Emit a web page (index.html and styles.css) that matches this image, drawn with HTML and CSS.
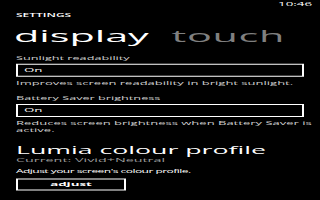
FILE: index.html
```html
<!DOCTYPE html>
<html>
<head>
<meta charset="utf-8">
<link rel="stylesheet" href="styles.css">
</head>
<body>
<div class="screen">
  <div class="status"><span class="clock">10:46</span></div>
  <div class="page">
    <div class="title">SETTINGS</div>
    <div class="pivot">
      <span class="pivot-item active">display</span>
      <span class="pivot-item">touch</span>
    </div>
    <div class="content">
      <div class="label">Sunlight readability</div>
      <div class="picker">On</div>
      <div class="desc">Improves screen readability in bright sunlight.</div>
      <div class="label label-next">Battery Saver brightness</div>
      <div class="picker">On</div>
      <div class="desc">Reduces screen brightness when Battery Saver is<br>active.</div>
      <div class="heading">Lumia colour profile</div>
      <div class="sub">Current: Vivid+Neutral</div>
      <div class="note">Adjust your screen's colour profile.</div>
      <button class="btn">adjust</button>
    </div>
  </div>
</div>
</body>
</html>
```
FILE: styles.css
```css
html, body {
  margin: 0;
  padding: 0;
  width: 320px;
  height: 200px;
  background: #000;
  overflow: hidden;
}
.screen {
  width: 478px;
  height: 796px;
  overflow: hidden;
  transform: scale(0.6667, 0.25);
  transform-origin: 0 0;
  font-family: "Open Sans", "DejaVu Sans", sans-serif;
  color: #fff;
  background: #000;
}
.status {
  height: 32px;
  display: flex;
  justify-content: flex-end;
  align-items: center;
  padding-right: 10px;
}
.clock {
  font-size: 20px;
  line-height: 32px;
  color: #fff;
}
.page {
  padding: 0 24px;
}
.title {
  margin-top: 18px;
  font-size: 18px;
  line-height: 24px;
  font-weight: 600;
}
.pivot {
  margin-top: 32px;
  margin-left: -3px;
  display: flex;
  gap: 34px;
  font-size: 62px;
  line-height: 72px;
  font-weight: 400;
  white-space: nowrap;
}
.pivot-item {
  color: #808080;
}
.pivot-item.active {
  color: #fff;
  letter-spacing: 0;
}
.pivot-item + .pivot-item {
  letter-spacing: 1px;
}
.content {
  margin-top: 41px;
  display: flex;
  flex-direction: column;
  align-items: flex-start;
}
.label, .desc, .sub, .note {
  font-size: 19px;
  line-height: 26px;
  white-space: nowrap;
}
.label {
  color: #cfcfcf;
}
.label-next {
  margin-top: 35px;
}
.picker {
  margin-top: 10px;
  box-sizing: border-box;
  width: 432px;
  height: 52px;
  border-style: solid;
  border-color: #fff;
  border-width: 4px 3px;
  padding-left: 9px;
  font-size: 20px;
  line-height: 44px;
}
.desc {
  margin-top: 12px;
  font-size: 19.5px;
  color: #cfcfcf;
}
.heading {
  margin-top: 42px;
  font-size: 40px;
  line-height: 52px;
}
.sub {
  margin-top: 0;
  font-size: 21.5px;
  color: #9a9a9a;
}
.note {
  margin-top: 21px;
  font-size: 18px;
  letter-spacing: -0.8px;
}
.btn {
  margin-top: 15px;
  box-sizing: border-box;
  width: 165px;
  height: 48px;
  border: 3px solid #fff;
  border-width: 4px 3px;
  background: transparent;
  color: #fff;
  font-family: "Open Sans", "DejaVu Sans", sans-serif;
  font-size: 20px;
  font-weight: 700;
  line-height: 40px;
  padding: 0;
}
```
